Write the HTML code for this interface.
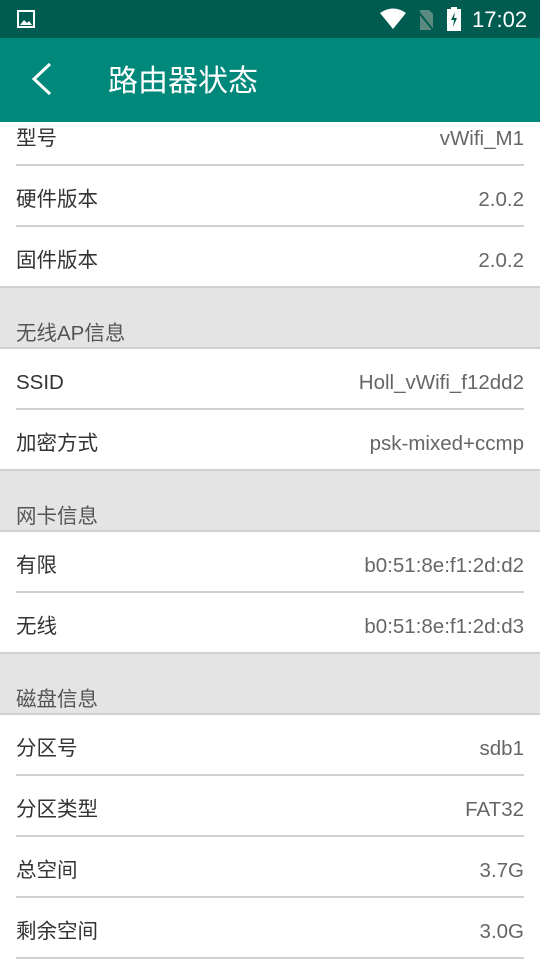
<!DOCTYPE html>
<html><head><meta charset="utf-8"><style>
*{margin:0;padding:0;box-sizing:border-box}
body{width:540px;height:960px;overflow:hidden;background:#fff;font-family:"Liberation Sans","Noto Sans CJK SC",sans-serif;position:relative}
.sb{position:absolute;top:0;left:0;width:540px;height:38px;background:#005c50;color:#fff}
.title{position:absolute;left:108px;top:18px;font-size:30px;color:#fff}
.abs{position:absolute;left:0;width:540px}
.row{height:61px;display:flex;align-items:center;justify-content:space-between;padding:0 16px;position:relative;font-size:20.5px}
.row .l{color:#333}.row .v,.row .lat{color:#666;position:relative;top:3px}
.row .lat{color:#333}
.row:after{content:"";position:absolute;left:16px;right:16px;bottom:0;height:2px;background:#d0d0d0}
.row.last:after{left:0;right:0}
.hd{height:61px;background:#e4e4e4;font-size:20.5px;color:#555;padding:0 16px;display:flex;align-items:flex-end;padding-bottom:1px;border-bottom:2px solid #d0d0d0}
</style></head><body>
<div class="sb">
<svg style="position:absolute;left:17px;top:10px" width="18" height="18" viewBox="0 0 18 18"><rect x="1" y="1" width="16" height="16" fill="none" stroke="#fff" stroke-width="2"/><path d="M3 15 L7 10 L10 13 L12 11 L15 15Z" fill="#fff"/></svg>
<svg style="position:absolute;left:380px;top:8px" width="26" height="22" viewBox="0 0 26 22"><path d="M0 5 Q13 -4 26 5 L13 21Z" fill="#fff"/></svg>
<svg style="position:absolute;left:416px;top:9px" width="18" height="22" viewBox="0 0 18 22"><path d="M4 1 H13 L17 5 V21 H4Z" fill="#5a8a80"/><path d="M1 1 L17 21" stroke="#005c50" stroke-width="2"/></svg>
<svg style="position:absolute;left:447px;top:7px" width="14" height="24" viewBox="0 0 14 24"><rect x="4" y="0" width="6" height="3" fill="#fff"/><rect x="0" y="2" width="14" height="22" fill="#fff"/><path d="M8 5 L4 13 H7 L6 20 L10 11 H7Z" fill="#005c50"/></svg>
<div style="position:absolute;left:472px;top:7px;font-size:22px">17:02</div>
</div>
<div class="abs" style="top:105px">
<div class="row"><span class="l">型号</span><span class="v">vWifi_M1</span></div>
<div class="row"><span class="l">硬件版本</span><span class="v">2.0.2</span></div>
<div class="row last"><span class="l">固件版本</span><span class="v">2.0.2</span></div>
<div class="hd">无线AP信息</div>
<div class="row"><span class="lat">SSID</span><span class="v">Holl_vWifi_f12dd2</span></div>
<div class="row last"><span class="l">加密方式</span><span class="v">psk-mixed+ccmp</span></div>
<div class="hd">网卡信息</div>
<div class="row"><span class="l">有限</span><span class="v">b0:51:8e:f1:2d:d2</span></div>
<div class="row last"><span class="l">无线</span><span class="v">b0:51:8e:f1:2d:d3</span></div>
<div class="hd">磁盘信息</div>
<div class="row"><span class="l">分区号</span><span class="v">sdb1</span></div>
<div class="row"><span class="l">分区类型</span><span class="v">FAT32</span></div>
<div class="row"><span class="l">总空间</span><span class="v">3.7G</span></div>
<div class="row"><span class="l">剩余空间</span><span class="v">3.0G</span></div>
</div>
<div style="position:absolute;top:38px;left:0;width:540px;height:84px;background:#00897b;z-index:1">
<svg style="position:absolute;left:30px;top:24px" width="24" height="34" viewBox="0 0 24 34"><path d="M20 2 L4 17 L20 32" fill="none" stroke="#fff" stroke-width="3"/></svg>
<div class="title">路由器状态</div>
</div>
</body></html>
